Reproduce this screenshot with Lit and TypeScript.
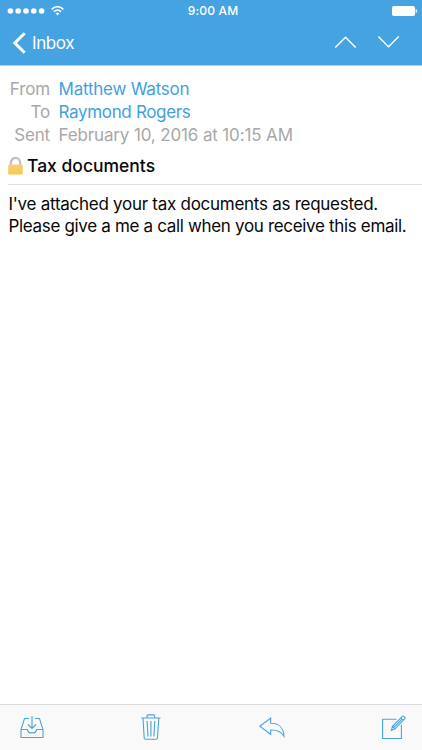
import { LitElement, html, css, svg } from "lit";
import { customElement } from "lit/decorators.js";

@customElement("status-bar")
class StatusBar extends LitElement {
  static styles = css`
    :host { display: grid; grid-template-columns: 1fr auto 1fr; align-items: center; height: 22px; padding: 0 4px 0 7px; color: #fff; }
    .signal { display: flex; align-items: center; gap: 5px; }
    .time { font-size: 12px; font-weight: 500; line-height: 22px; letter-spacing: 0.17px; padding-left: 1px; }
    .battery { justify-self: end; }
    svg { display: block; }
  `;
  render() {
    return html`
      <div class="signal">
        <svg width="39" height="8" fill="#fff">
          ${[0, 1, 2, 3, 4].map((i) => svg`<circle cx=${3.4 + i * 7.8} cy="4" r="2.8"></circle>`)}
        </svg>
        <svg width="13" height="10" viewBox="0 0 13 10" fill="none" stroke="#fff" stroke-width="1.6">
          <path d="M.7 3.4C4-.1 9-.1 12.3 3.4M2.9 5.7C5 3.6 8 3.6 10.1 5.7"></path>
          <path d="M6.5 9.4 4.5 7.3Q6.5 5.7 8.5 7.3Z" fill="#fff" stroke="none"></path>
        </svg>
      </div>
      <div class="time">9:00 AM</div>
      <svg class="battery" width="27" height="12" viewBox="0 0 27 12">
        <rect x="1" y="1" width="23" height="10" rx="1.8" fill="#fff"></rect>
        <path d="M25 4.2Q26.5 6 25 7.8Z" fill="#fff" stroke="#fff" stroke-width=".6"></path>
      </svg>
    `;
  }
}

@customElement("nav-bar")
class NavBar extends LitElement {
  static styles = css`
    :host { display: flex; align-items: center; justify-content: space-between; height: 42px; padding: 0 22px 0 12px; color: #fff; }
    .back { display: flex; align-items: center; gap: 6px; font-size: 17px; line-height: 24px; letter-spacing: -0.4px; }
    .steps { display: flex; gap: 20px; margin-top: -2px; }
    svg { display: block; fill: none; stroke: #fff; }
  `;
  render() {
    return html`
      <div class="back">
        <svg width="14" height="22" viewBox="0 0 14 22" stroke-width="3"><path d="M12.7 1.3 2.8 11l9.9 9.7"></path></svg>
        <span>Inbox</span>
      </div>
      <div class="steps">
        <svg width="23" height="14" viewBox="0 0 23 14" stroke-width="1.5"><path d="M1.3 12.5 11.5 2.2l10.2 10.3"></path></svg>
        <svg width="23" height="14" viewBox="0 0 23 14" stroke-width="1.5"><path d="M1.3 1.5 11.5 11.8 21.7 1.5"></path></svg>
      </div>
    `;
  }
}

@customElement("mail-message")
class MailMessage extends LitElement {
  static styles = css`
    :host { display: block; padding-left: 8px; }
    .meta { display: grid; grid-template-columns: 42px auto; column-gap: 8.5px; grid-auto-rows: 23.3px; padding-top: 11.5px; font-size: 17px; line-height: 23.3px; color: #a8a8a8; white-space: nowrap; letter-spacing: -0.14px; }
    .label { text-align: right; }
    .link { color: #419fdf; }
    .from { letter-spacing: -0.22px; }
    .to { letter-spacing: -0.33px; }
    .subject { display: flex; align-items: center; gap: 4px; height: 37.5px; border-bottom: 1px solid #dedfe1; font-size: 17.5px; font-weight: 500; box-sizing: border-box; }
    .body { margin: 8px 0 0 0.5px; font-size: 17px; line-height: 22.5px; white-space: nowrap; letter-spacing: -0.27px; }
    .l2 { letter-spacing: -0.33px; }
  `;
  render() {
    return html`
      <div class="meta">
        <span class="label">From</span><span class="link from">Matthew Watson</span>
        <span class="label">To</span><span class="link to">Raymond Rogers</span>
        <span class="label">Sent</span><span class="sent">February 10, 2016 at 10:15 AM</span>
      </div>
      <div class="subject">
        <svg width="15" height="18" viewBox="0 0 15 18">
          <defs>
            <linearGradient id="body" x1="0" y1="0" x2="0" y2="1"><stop stop-color="#f3d083"></stop><stop offset="1" stop-color="#fdc840"></stop></linearGradient>
          </defs>
          <path d="M2.8 9V5.7a4.7 4.7 0 0 1 9.4 0V9" fill="none" stroke="#bfc0c1" stroke-width="2.2"></path>
          <rect x=".2" y="7.6" width="14.6" height="10" rx="1.4" fill="url(#body)"></rect>
        </svg>
        <span>Tax documents</span>
      </div>
      <div class="body">
        <div class="l1">I've attached your tax documents as requested.</div>
        <div class="l2">Please give a me a call when you receive this email.</div>
      </div>
    `;
  }
}

@customElement("tool-bar")
class ToolBar extends LitElement {
  static styles = css`
    :host { display: flex; align-items: flex-start; height: 46px; box-sizing: border-box; border-top: 1px solid #dcdcdc; background: #f9f9f9; padding: 8px 16px 0 20px; }
    svg { display: block; flex: none; fill: none; stroke: #4ba3dd; stroke-width: 1.1; }
    .trash { margin-left: 96.5px; }
    .reply { margin-left: 98.5px; }
    .compose { margin-left: auto; }
  `;
  render() {
    return html`
      <svg width="24" height="28" viewBox="20 713 24 28">
        <path d="M29 718.5H24.5L21 729.5V737.5H43V729.5L39.5 718.5H35M21 729.5H27.3Q28.2 732.9 30 732.9H34Q35.8 732.9 36.7 729.5H43M32 716V728M28 724.5 32 728.5 36 724.5"></path>
      </svg>
      <svg class="trash" width="20" height="28" viewBox="141 713 20 28">
        <path d="M141.3 718H160.5M143 718 144.2 738Q144.3 739.3 145.6 739.3H156Q157.4 739.3 157.5 738L158.8 718M147 717.8V715.9Q147 714.9 148 714.9H153.6Q154.6 714.9 154.6 715.9V717.8M147.1 721 148 736.5M150.9 721V736.5M154.8 721 153.9 736.5"></path>
      </svg>
      <svg class="reply" width="27" height="28" viewBox="259 713 27 28">
        <path d="M259.8 726.2 270.7 718V723.3C278.5 723.1 283.6 727.8 284 736.3C281 731.6 277 729.8 270.7 730.1V734.3Z"></path>
      </svg>
      <svg class="compose" width="25" height="28" viewBox="381 713 25 28">
        <path d="M396.5 719.3H382.6V738.5H401.4V724.8M391.4 730.3 392.5 726.3 402.6 716.2Q403.2 715.8 403.8 716.3L405 717.5Q405.4 718.1 404.9 718.7L395 728.8ZM392.5 726.3 395 728.8M400.9 717.9 403.3 720.3M393.8 727.5 402.1 719.2"></path>
      </svg>
    `;
  }
}

@customElement("app-root")
class AppRoot extends LitElement {
  static styles = css`
    :host { display: flex; flex-direction: column; height: 750px; background: #fff; color: #080808; font-family: Inter, "Liberation Sans", sans-serif; overflow: hidden; }
    .header { background: #46a3e2; height: 65px; border-bottom: 1px solid #a9d4f1; }
    .content { flex: 1; }
  `;
  render() {
    return html`
      <div class="header"><status-bar></status-bar><nav-bar></nav-bar></div>
      <mail-message class="content"></mail-message>
      <tool-bar></tool-bar>
    `;
  }
}
